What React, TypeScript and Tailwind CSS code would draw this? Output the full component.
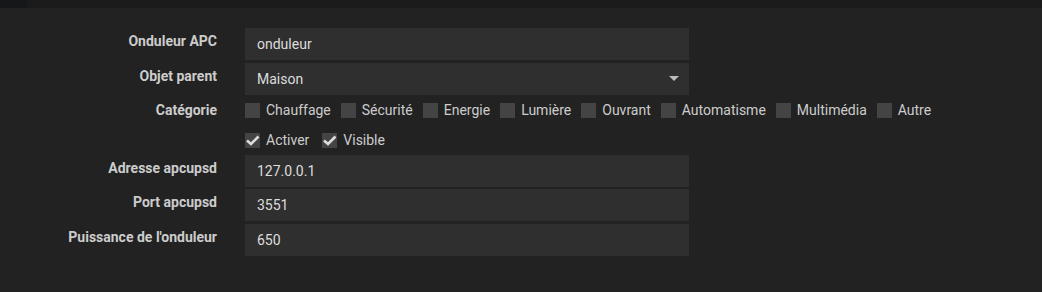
import React from "react";

function Box({ checked }: { checked?: boolean }) {
  return (
    <span className="w-[15px] h-[15px] bg-[#444444] flex items-center justify-center shrink-0 relative">
      {checked && (
        <svg width="15" height="15" viewBox="0 0 15 15" className="absolute left-0 top-0">
          <path d="M2 7.5 L6 11 L13.5 3.5" fill="none" stroke="#dddddd" strokeWidth="2.6" />
        </svg>
      )}
    </span>
  );
}

function Check({ label, checked }: { label: string; checked?: boolean }) {
  return (
    <label className="flex items-center mr-[10px]">
      <Box checked={checked} />
      <span className="ml-[6px] text-[14px] text-[#cccccc]">{label}</span>
    </label>
  );
}

function Label({ children }: { children: React.ReactNode }) {
  return (
    <div className="w-[217px] shrink-0 text-right text-[14px] font-bold text-[#cccccc] leading-[18px]">
      {children}
    </div>
  );
}

function InputRow({ label, value, select }: { label: string; value: string; select?: boolean }) {
  return (
    <div className="flex items-start">
      <div className="pt-[4px]">
        <Label>{label}</Label>
      </div>
      <div className="ml-[28px] w-[444px] h-[32px] bg-[#2f2f2f] flex items-center px-[12px] text-[14px] text-[#dddddd] justify-between">
        <span>{value}</span>
        {select && (
          <svg width="10" height="6" viewBox="0 0 10 6" className="mr-[-2px]">
            <path d="M0 0 L10 0 L5 5 Z" fill="#bbbbbb" />
          </svg>
        )}
      </div>
    </div>
  );
}

export default function App() {
  return (
    <div
      className="w-[1042px] h-[292px] bg-[#222222] overflow-hidden"
      style={{ fontFamily: "Roboto, 'Liberation Sans', sans-serif" }}
    >
      <div className="h-[8px] flex">
        <div className="w-[27px] bg-[#151719]" />
        <div className="flex-1 bg-[#1b1b1b]" />
      </div>
      <div className="pt-[20px] flex flex-col">
        <InputRow label="Onduleur APC" value="onduleur" />
        <div className="h-[3px]" />
        <InputRow label="Objet parent" value="Maison" select />
        <div className="flex items-center mt-[7px] h-[16px]">
          <Label>Catégorie</Label>
          <div className="ml-[28px] flex items-center">
            <Check label="Chauffage" />
            <Check label="Sécurité" />
            <Check label="Energie" />
            <Check label="Lumière" />
            <Check label="Ouvrant" />
            <Check label="Automatisme" />
            <Check label="Multimédia" />
            <Check label="Autre" />
          </div>
        </div>
        <div className="flex items-center mt-[14px] h-[16px]">
          <div className="w-[217px]" />
          <div className="ml-[28px] flex items-center">
            <Check label="Activer" checked />
            <span className="w-[3px]" />
            <Check label="Visible" checked />
          </div>
        </div>
        <div className="h-[7px]" />
        <InputRow label="Adresse apcupsd" value="127.0.0.1" />
        <div className="h-[2px]" />
        <InputRow label="Port apcupsd" value="3551" />
        <div className="h-[3px]" />
        <InputRow label="Puissance de l'onduleur" value="650" />
      </div>
    </div>
  );
}
